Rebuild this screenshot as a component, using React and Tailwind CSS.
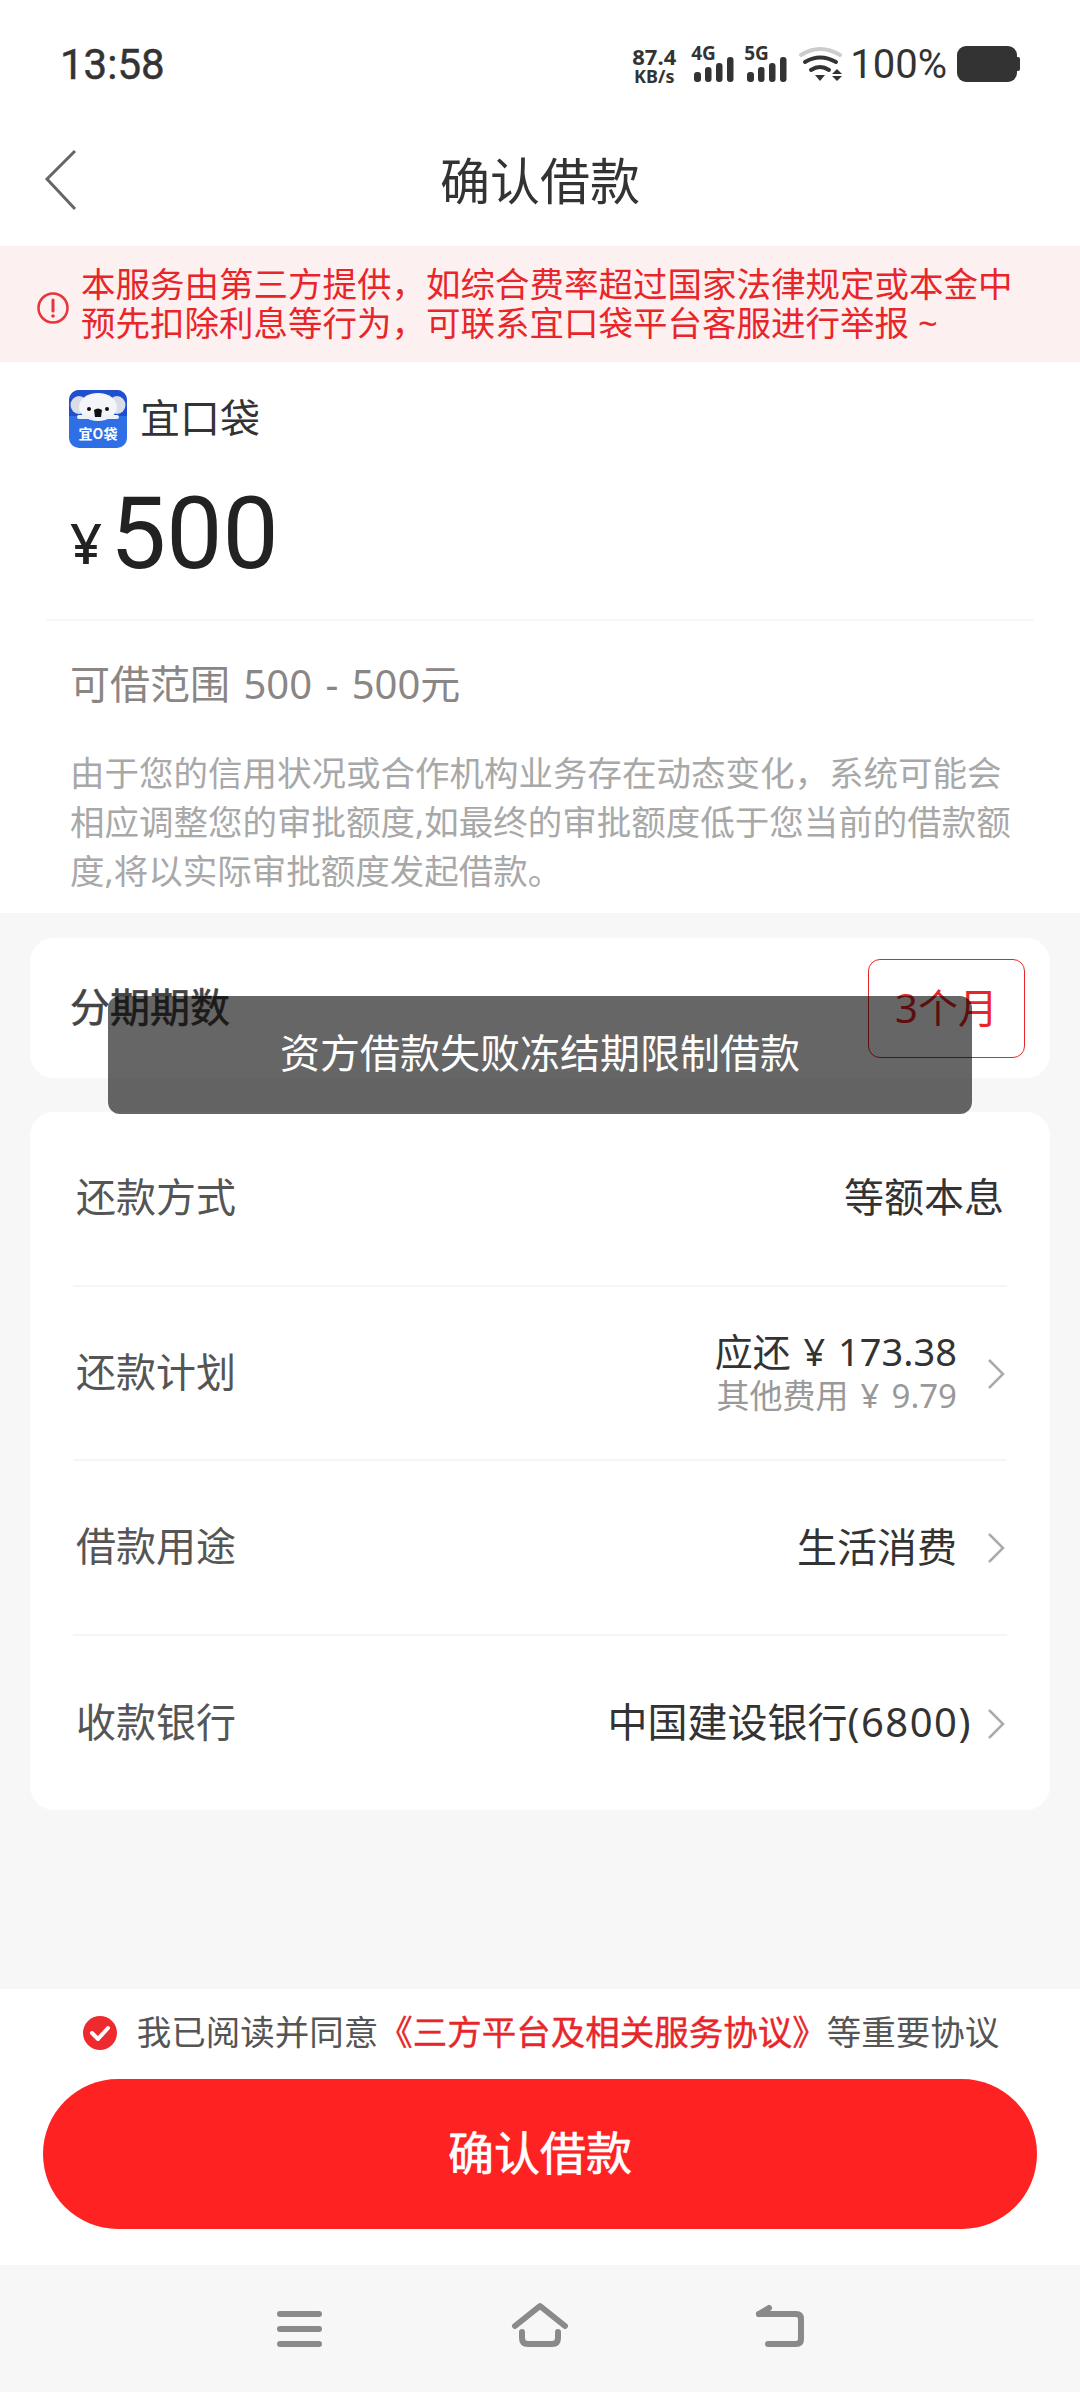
import React from 'react';

const Chevron = () => (
  <svg width="18" height="32" viewBox="0 0 18 32" fill="none" className="shrink-0">
    <path d="M2 2 L16 16 L2 30" stroke="#aaaaaa" strokeWidth="2.5" />
  </svg>
);

const Signal = ({ label }) => (
  <div className="relative w-[40px] h-[37px]">
    <span className="absolute left-[-3px] top-[-2px] text-[19px] leading-[18px] font-bold text-[#333]">{label}</span>
    <svg width="40" height="37" viewBox="0 0 40 37" className="absolute left-0 top-0">
      <rect x="0" y="26" width="7" height="10" rx="3" fill="#333" />
      <rect x="11" y="21" width="6.5" height="15" rx="3" fill="#333" />
      <rect x="22" y="17" width="6.5" height="19" rx="3" fill="#333" />
      <rect x="33" y="11" width="6.5" height="25" rx="3" fill="#333" />
    </svg>
  </div>
);

const Wifi = () => (
  <svg width="43" height="36" viewBox="0 0 43 36" fill="none">
    <path d="M2 9 Q21 -3 41 9" stroke="#cccccc" strokeWidth="4" strokeLinecap="round" />
    <path d="M6 16 Q21 7 37 16" stroke="#333" strokeWidth="4" strokeLinecap="round" />
    <path d="M12 24 Q21 18 30 24" stroke="#333" strokeWidth="4" strokeLinecap="round" />
    <path d="M16 29 H26 L21 35 Z" fill="#333" />
    <path d="M33 28 H43 L38 23 Z" fill="#333" />
    <path d="M33 30 H43 L38 35 Z" fill="#333" />
  </svg>
);

const Logo = () => (
  <svg width="58" height="58" viewBox="0 0 58 58" className="shrink-0">
    <rect width="58" height="58" rx="10" fill="#2f6fe6" />
    <path d="M0 26 V10 A10 10 0 0 1 10 0 H48 A10 10 0 0 1 58 10 V26 Z" fill="#1f4fcf" />
    <ellipse cx="10" cy="15" rx="8.5" ry="9" fill="#d9dde6" />
    <ellipse cx="48" cy="15" rx="8.5" ry="9" fill="#d9dde6" />
    <ellipse cx="29" cy="17" rx="19" ry="14" fill="#f4f5f8" />
    <rect x="8" y="25" width="42" height="4" rx="2" fill="#eef1f7" />
    <circle cx="20" cy="19" r="2" fill="#111" />
    <circle cx="38" cy="19" r="2" fill="#111" />
    <path d="M25 20 Q29 17 33 20 L32 27 H26 Z" fill="#111" />
    <text x="29" y="49" textAnchor="middle" fontSize="14" fontWeight="700" fill="#fff" fontFamily="'Noto Sans CJK SC', sans-serif">宜O袋</text>
  </svg>
);

const Row = ({ label, children, chevron = true, divider = true }) => (
  <div className={`flex items-center justify-between h-[174.5px] mx-[43px] ${divider ? 'border-b-2 border-[#f5f5f5]' : ''}`}>
    <span className="ml-[3px] -mt-[2px] text-[40px] leading-[50px] text-[#555555]">{label}</span>
    <div className="flex items-center">
      {children}
      {chevron && <span className="ml-[15px] mr-[2px] mt-[2px] flex"><Chevron /></span>}
    </div>
  </div>
);

export default function App() {
  return (
    <div className="relative w-[1080px] h-[2392px] flex flex-col bg-[#f7f7f7] overflow-hidden font-['Noto_Sans','Noto_Sans_CJK_SC',sans-serif]">
      {/* status bar */}
      <div className="h-[116px] shrink-0 bg-white flex items-start justify-between pl-[60px] pr-[60px] pt-[46px]">
        <span className="text-[42px] leading-[38px] text-[#333] font-['Roboto',sans-serif] [-webkit-text-stroke:0.5px_#333]">13:58</span>
        <div className="flex items-start">
          <div className="w-[46px] flex flex-col items-center text-[#333] font-bold">
            <span className="text-[22px] leading-[21px]">87.4</span>
            <span className="text-[18px] leading-[18px]">KB/s</span>
          </div>
          <div className="ml-[17px]"><Signal label="4G" /></div>
          <div className="ml-[13px]"><Signal label="5G" /></div>
          <div className="ml-[12px]"><Wifi /></div>
          <span className="ml-[8px] mt-[1px] text-[40px] leading-[36px] text-[#333] font-['Roboto',sans-serif]">100%</span>
          <div className="ml-[10px] flex items-center">
            <div className="w-[60px] h-[36px] rounded-[9px] bg-[#333]" />
            <div className="w-[3px] h-[14px] rounded-r-[2px] bg-[#333]" />
          </div>
        </div>
      </div>

      {/* header */}
      <div className="relative h-[130px] shrink-0 bg-white flex items-center justify-center">
        <svg width="34" height="62" viewBox="0 0 34 62" fill="none" className="absolute left-[44px] top-[33px]">
          <path d="M31 2 L3 30 L31 60" stroke="#666666" strokeWidth="3" />
        </svg>
        <span className="text-[50px] leading-[60px] text-[#333]">确认借款</span>
      </div>

      {/* notice */}
      <div className="h-[116px] shrink-0 bg-[#fdf0f0] flex items-center pl-[37px]">
        <svg width="32" height="34" viewBox="0 0 32 34" fill="none" className="shrink-0 mt-[8px]">
          <circle cx="16" cy="17" r="14.5" stroke="#e8343a" strokeWidth="2.5" />
          <path d="M16 9 V20" stroke="#e8343a" strokeWidth="3" strokeLinecap="round" />
          <circle cx="16" cy="25" r="1.8" fill="#e8343a" />
        </svg>
        <p className="ml-[12px] -mt-[3px] w-[980px] text-[34.5px] leading-[39px] text-[#e8262a]">
          本服务由第三方提供，如综合费率超过国家法律规定或本金中<br />预先扣除利息等行为，可联系宜口袋平台客服进行举报 ~
        </p>
      </div>

      {/* amount */}
      <div className="h-[551px] shrink-0 bg-white">
        <div className="flex items-center pl-[69px] pt-[28px]">
          <Logo />
          <span className="ml-[13px] -mt-[3px] text-[40px] leading-[58px] text-[#333]">宜口袋</span>
        </div>
        <div className="flex items-baseline pl-[24px] h-[173px] pt-[31px] border-b-2 border-[#f8f8f8] mx-[46px]">
          <span className="-translate-y-[4px] text-[56px] leading-[110px] font-medium text-[#222]">¥</span>
          <span className="ml-[8px] text-[100px] leading-[110px] text-[#222] font-['Roboto',sans-serif]">500</span>
        </div>
        <p className="ml-[70px] mt-[39px] text-[40px] leading-[48px] text-[#8a8684] [word-spacing:3px]">可借范围 500 - 500元</p>
        <p className="ml-[70px] mt-[40px] w-[960px] text-[34.5px] leading-[49px] text-[#a8a8a8]">
          由于您的信用状况或合作机构业务存在动态变化，系统可能会相应调整您的审批额度,如最终的审批额度低于您当前的借款额度,将以实际审批额度发起借款。
        </p>
      </div>

      {/* terms */}
      <div className="mx-[30px] mt-[25px] h-[140px] shrink-0 rounded-[24px] bg-white flex items-center justify-between pl-[40px] pr-[25px]">
        <span className="-mt-[2px] text-[40px] text-[#444] [-webkit-text-stroke:0.6px_#444]">分期期数</span>
        <div className="w-[157px] h-[99px] rounded-[12px] border border-[#e8262a] flex items-center justify-center">
          <span className="text-[40px] text-[#e8262a]">3个月</span>
        </div>
      </div>

      <div className="mx-[30px] mt-[34px] shrink-0 rounded-[24px] bg-white">
        <Row label="还款方式" chevron={false}>
          <span className="mr-[3px] -mt-[2px] text-[40px] leading-[50px] text-[#333]">等额本息</span>
        </Row>
        <Row label="还款计划">
          <div className="flex flex-col items-end mr-[15px] -mt-[3px]">
            <span className="text-[38px] leading-[49px] text-[#333] [word-spacing:3px]">应还 ¥ 173.38</span>
            <span className="text-[33px] leading-[40px] text-[#999999] [word-spacing:3.5px]">其他费用 ¥ 9.79</span>
          </div>
        </Row>
        <Row label="借款用途">
          <span className="mr-[15px] -mt-[1px] text-[40px] leading-[50px] text-[#333]">生活消费</span>
        </Row>
        <Row label="收款银行" divider={false}>
          <span className="-mt-[2px] text-[40px] leading-[50px] text-[#333]">中国建设银行<span className="tracking-[1.5px]">(6800)</span></span>
        </Row>
      </div>

      {/* footer */}
      <div className="mt-auto h-[276px] shrink-0 bg-white">
        <div className="h-[90px] flex items-center justify-center">
          <svg width="34" height="34" viewBox="0 0 34 34" className="shrink-0 ml-[2px] -mt-[2px]">
            <circle cx="17" cy="17" r="17" fill="#ee2a2e" />
            <path d="M9 17 L15 23 L25 12" fill="none" stroke="#fff" strokeWidth="4" strokeLinecap="round" strokeLinejoin="round" />
          </svg>
          <p className="ml-[20px] -mt-[5px] text-[34.5px] leading-[44px] text-[#555555] whitespace-nowrap">
            我已阅读并同意<span className="text-[#e8262a] [-webkit-text-stroke:0.4px_#e8262a]">《三方平台及相关服务协议》</span>等重要协议
          </p>
        </div>
        <button className="block mx-[43px] w-[994px] h-[150px] rounded-full bg-[#ff2222] pb-[4px] text-[46px] text-white [-webkit-text-stroke:0.6px_#fff]">确认借款</button>
      </div>

      {/* nav bar */}
      <div className="h-[127px] shrink-0 bg-[#f7f7f7] flex justify-center pt-[24px]">
        <svg width="600" height="60" viewBox="240 2289 600 60" fill="none" stroke="#8a8a8a" strokeWidth="6" strokeLinecap="round" strokeLinejoin="round">
          <path d="M280 2314 H319 M280 2329 H319 M280 2344 H319" />
          <path d="M515 2326 L540 2306 L565 2326" />
          <path d="M522 2332 V2338 Q522 2344 528 2344 H552 Q558 2344 558 2338 V2332" />
          <path d="M759 2314 H796 Q801 2314 801 2319 V2339 Q801 2344 796 2344 H768" />
          <path d="M759 2314 L769 2308" />
        </svg>
      </div>

      {/* toast */}
      <div className="absolute left-[108px] top-[996px] w-[864px] h-[118px] rounded-[12px] bg-black/60 flex items-center justify-center pb-[4px]">
        <span className="text-[40px] text-white">资方借款失败冻结期限制借款</span>
      </div>
    </div>
  );
}
